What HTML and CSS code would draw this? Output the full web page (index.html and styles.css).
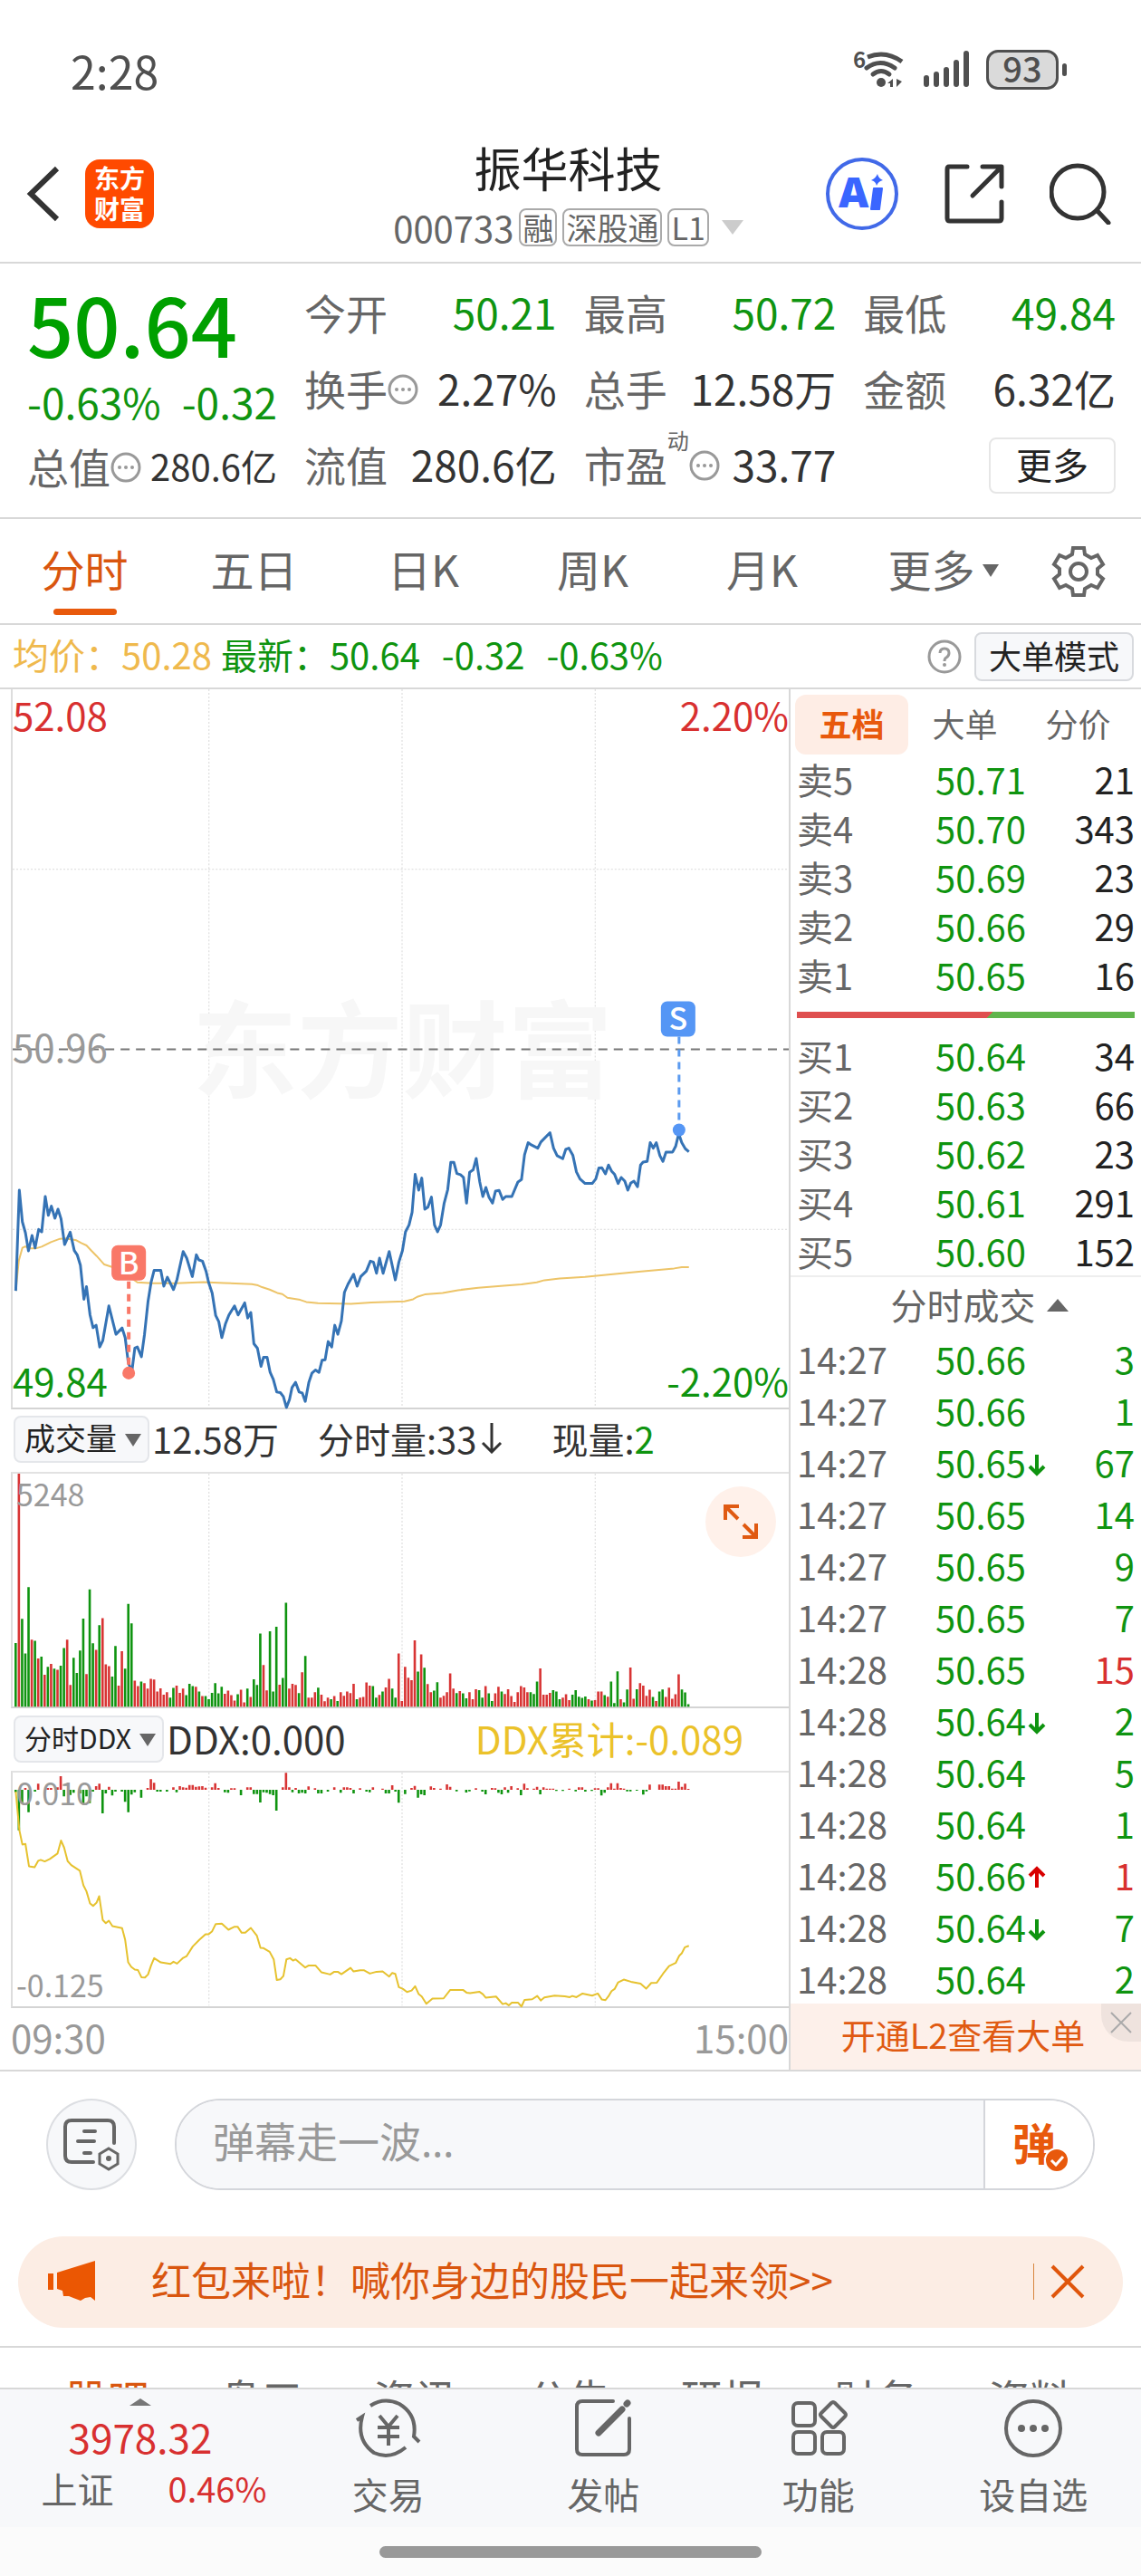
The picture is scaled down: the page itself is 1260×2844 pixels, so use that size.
FILE: index.html
```html
<!DOCTYPE html>
<html lang="zh-CN">
<head>
<meta charset="utf-8">
<meta name="viewport" content="width=device-width, initial-scale=1">
<title>振华科技 000733</title>
<link rel="stylesheet" href="styles.css">
</head>
<body>
<div class="app">
  <div class="status">
    <span class="clock">2:28</span>
    <div class="status-icons">
      <svg width="60" height="44" viewBox="0 0 60 44" fill="none" stroke="#4f4f4f" stroke-width="5" stroke-linecap="round">
        <text x="1" y="20" class="wifi-gen">6</text>
        <path d="M17 8Q37 0 55 13" stroke-linecap="butt"/><path d="M16 20Q31 9 47 20M23 27Q32 20 41 27"/>
        <circle cx="32" cy="36" r="5" fill="#4f4f4f" stroke="none"/>
        <path d="M39 37l6-5v9h-3v-4zM49 32l6 3-6 6z" fill="#4f4f4f" stroke="none"/>
      </svg>
      <svg width="52" height="44" viewBox="0 0 52 44" stroke="#4f4f4f" stroke-width="6" stroke-linecap="round">
        <path d="M4 31v7M15 27v11M26 22v16M37 14v24M48 4v34"/>
      </svg>
      <span class="battery">93</span>
    </div>
  </div>

  <header class="header">
    <div class="header-side">
      <button class="plain" aria-label="返回"><svg width="40" height="64" viewBox="0 0 40 64" fill="none" stroke="#333" stroke-width="6"><path d="M35 4L6 32l29 28"/></svg></button>
      <a class="logo" href="#">东方<br>财富</a>
    </div>
    <div class="title">
      <h1>振华科技</h1>
      <div class="sub"><span>000733</span><i class="tag">融</i><i class="tag">深股通</i><i class="tag">L1</i><svg class="sub-tri" width="24" height="16" viewBox="0 0 24 16"><path d="M0 0h24L12 16z" fill="#ccc"/></svg></div>
    </div>
    <div class="header-side header-actions">
      <button class="plain" aria-label="Ai"><svg width="82" height="82" viewBox="0 0 82 82">
        <circle cx="41" cy="41" r="38" fill="none" stroke="#4169e8" stroke-width="4"/>
        <text x="15" y="56" class="ai-text">A</text>
        <path d="M54 35h9l-3 23h-9z" fill="#3a66ff" stroke="#3a66ff" stroke-width="2" stroke-linejoin="round"/>
        <path d="M58 19q1 5 6 7-5 1-7 6-1-5-6-6 5-2 7-7z" fill="#3a66ff"/>
      </svg></button>
      <button class="plain" aria-label="分享"><svg width="66" height="66" viewBox="0 0 66 66" fill="none" stroke="#333" stroke-width="5" stroke-linecap="round" stroke-linejoin="round"><path d="M25 3H5Q3 3 3 6v54q0 3 3 3h54q3 0 3-3V42M42 3h21v22M62 4L31 35"/></svg></button>
      <button class="plain" aria-label="搜索"><svg width="68" height="68" viewBox="0 0 68 68" fill="none" stroke="#333" stroke-width="5" stroke-linecap="round"><circle cx="31" cy="32" r="29"/><path d="M52 52l13 14"/></svg></button>
    </div>
  </header>

  <main class="main">
    <section class="quote">
      <div class="quote-main">
        <div class="price">50.64</div>
        <div class="change"><span>-0.63%</span><span>-0.32</span></div>
        <div class="cell small"><span>总值<svg class="dots" width="34" height="34"><use href="#i-dots"/></svg></span><b>280.6亿</b></div>
      </div>
      <div class="quote-grid">
        <div class="cell"><span>今开</span><b class="down">50.21</b></div>
        <div class="cell"><span>最高</span><b class="down">50.72</b></div>
        <div class="cell"><span>最低</span><b class="down">49.84</b></div>
        <div class="cell"><span>换手<svg class="dots" width="34" height="34"><use href="#i-dots"/></svg></span><b>2.27%</b></div>
        <div class="cell"><span>总手</span><b>12.58万</b></div>
        <div class="cell"><span>金额</span><b>6.32亿</b></div>
        <div class="cell"><span>流值</span><b>280.6亿</b></div>
        <div class="cell"><span>市盈<sup>动</sup><svg class="dots" width="34" height="34"><use href="#i-dots"/></svg></span><b>33.77</b></div>
        <div class="cell cell-end"><button class="more">更多</button></div>
      </div>
    </section>

    <nav class="tabs">
      <a class="tab active" href="#">分时</a><a class="tab" href="#">五日</a><a class="tab" href="#">日K</a><a class="tab" href="#">周K</a><a class="tab" href="#">月K</a>
      <a class="tab tab-more" href="#">更多<svg width="18" height="14" viewBox="0 0 18 14"><path d="M0 0h18L9 14z" fill="#666"/></svg></a>
      <button class="plain gear" aria-label="设置"><svg width="60" height="60" viewBox="-30 -30 60 60" fill="none" stroke="#666" stroke-width="4"><path d="M-6-26H6L7-19 14-15 21-18 27-8 21-3V3L27 8 21 18 14 15 7 19 6 26H-6L-7 19-14 15-21 18-27 8-21 3V-3L-27-8-21-18-14-15-7-19z"/><circle r="9"/></svg></button>
    </nav>

    <div class="info">
      <span class="avg">均价：50.28</span><span class="latest">最新：50.64</span><span class="latest">-0.32</span><span class="latest">-0.63%</span>
      <div class="info-end">
        <svg width="38" height="38" viewBox="0 0 38 38" fill="none" stroke="#999" stroke-width="3"><circle cx="19" cy="19" r="17"/><path d="M14 15q0-5 5-5t5 5q0 3-3 5-2 1-2 4"/><circle cx="19" cy="28" r="2" fill="#999" stroke="none"/></svg>
        <button class="mode">大单模式</button>
      </div>
    </div>

    <div class="board">
      <div class="charts">
        <div class="plot">
          <svg class="plot-svg" viewBox="0 0 856 792">
            <path class="grid" d="M216.500 0V792M429.500 0V792M642.500 0V792M0 198.500H856M0 595.500H856"/>
            <text class="watermark" x="430" y="441" text-anchor="middle">东方财富</text>
            <path d="M0 397H856" stroke="#777" stroke-width="2" stroke-dasharray="10 7"/>
            <g transform="translate(-14 380) scale(.5612 .3333)">
              <path class="avg-line" d="M31 850L37 750 44 708 50 703 57 710 70 710 82 704 100 689 118 678 128 677 150 683 160 692 170 700 180 718 190 735 205 763 220 771 235 780 245 788 252 800 270 822 300 825 345 825 400 821 440 824 495 828 507 832 515 838 530 846 545 857 555 861 565 873 590 880 602 887 625 891 690 893 730 889 795 885 812 878 820 870 835 862 870 857 900 848 940 840 990 833 1025 829 1055 822 1070 815 1100 809 1150 804 1200 796 1260 786 1300 780 1325 776 1340 772 1354 772"/>
              <path class="price-line" d="M31 850L38 517 44 622 50 658 56 718 63 667 69 708 76 647 82 655 89 538 95 600 101 570 108 610 114 580 120 612 127 697 138 656 146 717 152 732 158 765 165 878 170 836 177 930 183 972 189 964 196 1036 202 1015 214 900 228 994 240 973 246 1005 252 1085 259 1120 265 1040 270 1036 278 1068 284 995 291 885 297 822 303 782 316 782 322 835 329 805 341 846 348 812 360 720 367 742 378 803 386 731 391 748 398 752 405 785 410 822 417 857 424 932 430 952 436 1005 443 960 450 930 461 900 468 930 481 890 487 940 493 922 499 1025 506 1040 513 1100 518 1070 525 1070 531 1120 537 1142 544 1185 551 1187 557 1200 563 1236 569 1210 574 1170 581 1153 588 1185 594 1188 600 1216 607 1153 613 1123 620 1112 627 1120 633 1080 639 1078 645 1018 652 1036 658 964 664 994 671 950 677 855 684 828 695 795 702 835 709 803 720 785 728 752 734 755 740 792 746 742 753 792 765 720 777 814 784 755 791 717 797 655 804 632 810 590 816 465 823 517 829 477 835 580 841 573 848 540 854 632 860 655 866 632 873 560 880 515 886 425 892 425 898 462 905 466 911 475 917 560 923 458 930 450 936 412 943 490 949 538 955 508 961 540 968 560 974 520 981 518 988 548 994 538 1006 538 1018 490 1025 482 1031 400 1038 360 1044 367 1057 378 1063 358 1081 327 1088 378 1095 403 1106 413 1112 382 1118 378 1126 402 1133 457 1140 480 1150 495 1164 495 1171 480 1177 444 1183 443 1190 463 1196 434 1202 454 1208 465 1215 495 1221 475 1228 487 1234 517 1240 493 1246 487 1253 506 1259 434 1264 424 1272 422 1278 360 1284 378 1290 360 1297 403 1303 422 1309 391 1322 391 1328 372 1334 330 1340 360 1347 380 1354 390"/>
            </g>
            <path d="M128 653V750" stroke="#f97868" stroke-width="4" stroke-dasharray="8 6"/><circle cx="128" cy="754" r="7" fill="#f97868"/>
            <rect x="109" y="613" width="38" height="39" rx="7" fill="#f97868"/><text class="mark" x="128" y="645" text-anchor="middle">B</text>
            <path d="M735 383V484" stroke="#5b9bf0" stroke-width="3" stroke-dasharray="8 6"/><circle cx="735" cy="486" r="7" fill="#5596f5"/>
            <rect x="715" y="344" width="38" height="39" rx="7" fill="#5596f5"/><text class="mark" x="734" y="376" text-anchor="middle">S</text>
          </svg>
          <span class="lab tl up">52.08</span><span class="lab tr up">2.20%</span><span class="lab ml">50.96</span>
          <span class="lab bl down">49.84</span><span class="lab br down">-2.20%</span>
        </div>
        <div class="bar-head">
          <label class="pick"><select aria-label="指标一"><option>成交量</option></select><svg width="18" height="14" viewBox="0 0 18 14"><path d="M0 0h18L9 14z" fill="#666"/></svg></label>
          <span class="vol-total">12.58万</span><span class="vol-min">分时量:33<svg width="26" height="34" viewBox="0 0 26 34" fill="none" stroke="#333" stroke-width="3"><path d="M13 0v32M3 22l10 10 10-10"/></svg></span><span>现量:<em class="down">2</em></span>
        </div>
        <div class="plot">
          <svg class="plot-svg" viewBox="0 0 856 257">
            <path class="grid" d="M216.500 0V257M429.500 0V257M642.500 0V257"/>
            <path id="vol-down" fill="#0f9410"/><path id="vol-up" fill="#d83434"/>
          </svg>
          <span class="lab minor tl">5248</span>
          <button class="expand" aria-label="放大"><svg width="40" height="40" viewBox="0 0 40 40" fill="none" stroke="#e05a12" stroke-width="4"><path d="M3 18V3h15M4 4l13 13M37 22v15H22M36 36L23 23"/></svg></button>
        </div>
        <div class="bar-head">
          <label class="pick pick-ddx"><select aria-label="指标二"><option>分时DDX</option></select><svg width="18" height="14" viewBox="0 0 18 14"><path d="M0 0h18L9 14z" fill="#666"/></svg></label>
          <span class="ddx-now">DDX:0.000</span><span class="ddx-sum">DDX累计:-0.089</span>
        </div>
        <div class="plot">
          <span class="lab minor tl">0.010</span><span class="lab minor bl">-0.125</span>
          <svg class="plot-svg" viewBox="0 0 856 257">
            <path class="grid" d="M216.500 0V257M429.500 0V257M642.500 0V257"/>
            <path id="ddx-down" fill="#0f9410"/><path id="ddx-up" fill="#d83434"/>
            <g transform="translate(-14 -74) scale(.5612 .3333)"><path class="ddx-line" d="M31 285L38 412 44 460 50 458 57 532 68 535 75 514 80 511 88 516 98 508 113 490 120 447 126 470 133 515 140 528 157 547 164 595 170 615 177 655 183 663 190 652 195 631 202 710 208 720 214 712 221 730 240 737 246 775 252 850 258 865 265 874 271 875 278 899 285 900 291 890 297 860 303 836 316 850 335 855 341 848 348 854 360 835 367 829 379 797 392 775 404 757 410 757 417 747 424 723 436 722 449 742 461 732 467 732 475 752 482 752 493 736 505 762 512 802 518 803 530 815 538 840 544 908 551 906 557 895 563 840 570 836 576 844 581 840 600 867 607 860 620 860 632 883 649 890 657 881 664 881 671 889 689 868 695 880 708 876 715 876 727 887 740 881 752 880 765 897 771 885 777 888 784 932 792 938 800 948 809 943 816 929 823 955 829 963 838 987 850 970 872 969 885 941 910 941 917 950 924 952 942 947 949 955 955 967 975 963 988 988 994 985 1000 992 1006 983 1018 983 1025 996 1031 974 1046 972 1056 961 1063 976 1070 966 1090 960 1110 962 1120 965 1125 961 1133 965 1145 953 1164 960 1175 953 1183 973 1190 975 1196 962 1202 945 1208 938 1215 916 1226 907 1240 914 1259 920 1270 937 1280 918 1291 917 1303 888 1315 862 1328 852 1335 828 1340 820 1346 800 1354 795"/></g>
          </svg>
        </div>
        <div class="times"><span>09:30</span><span>15:00</span></div>
      </div>

      <aside class="side">
        <div class="side-tabs"><button class="on">五档</button><button>大单</button><button>分价</button></div>
        <table class="book">
          <tr><th>卖5</th><td class="down">50.71</td><td>21</td></tr>
          <tr><th>卖4</th><td class="down">50.70</td><td>343</td></tr>
          <tr><th>卖3</th><td class="down">50.69</td><td>23</td></tr>
          <tr><th>卖2</th><td class="down">50.66</td><td>29</td></tr>
          <tr><th>卖1</th><td class="down">50.65</td><td>16</td></tr>
        </table>
        <div class="ratio"></div>
        <table class="book">
          <tr><th>买1</th><td class="down">50.64</td><td>34</td></tr>
          <tr><th>买2</th><td class="down">50.63</td><td>66</td></tr>
          <tr><th>买3</th><td class="down">50.62</td><td>23</td></tr>
          <tr><th>买4</th><td class="down">50.61</td><td>291</td></tr>
          <tr><th>买5</th><td class="down">50.60</td><td>152</td></tr>
        </table>
        <h2 class="deals-title">分时成交<svg width="24" height="16" viewBox="0 0 24 16"><path d="M0 15L12 1l12 14z" fill="#666"/></svg></h2>
        <table class="book deals">
          <tr><th>14:27</th><td class="down">50.66</td><td class="down">3</td></tr>
          <tr><th>14:27</th><td class="down">50.66</td><td class="down">1</td></tr>
          <tr><th>14:27</th><td class="down">50.65<svg class="arr" width="20" height="28"><use href="#i-down"/></svg></td><td class="down">67</td></tr>
          <tr><th>14:27</th><td class="down">50.65</td><td class="down">14</td></tr>
          <tr><th>14:27</th><td class="down">50.65</td><td class="down">9</td></tr>
          <tr><th>14:27</th><td class="down">50.65</td><td class="down">7</td></tr>
          <tr><th>14:28</th><td class="down">50.65</td><td class="up">15</td></tr>
          <tr><th>14:28</th><td class="down">50.64<svg class="arr" width="20" height="28"><use href="#i-down"/></svg></td><td class="down">2</td></tr>
          <tr><th>14:28</th><td class="down">50.64</td><td class="down">5</td></tr>
          <tr><th>14:28</th><td class="down">50.64</td><td class="down">1</td></tr>
          <tr><th>14:28</th><td class="down">50.66<svg class="arr" width="20" height="28"><use href="#i-up"/></svg></td><td class="up">1</td></tr>
          <tr><th>14:28</th><td class="down">50.64<svg class="arr" width="20" height="28"><use href="#i-down"/></svg></td><td class="down">7</td></tr>
          <tr><th>14:28</th><td class="down">50.64</td><td class="down">2</td></tr>
        </table>
        <div class="l2"><a href="#">开通L2查看大单</a><button class="l2-close" aria-label="关闭"><svg width="24" height="24" viewBox="0 0 24 24" stroke="#aaa" stroke-width="2"><path d="M1 1l22 22M23 1L1 23"/></svg></button></div>
      </aside>
    </div>

    <form class="chat">
      <button type="button" class="chat-set" aria-label="弹幕设置"><svg width="66" height="60" viewBox="0 0 66 60" fill="none" stroke="#666" stroke-width="4" stroke-linecap="round"><path d="M35 50H11q-7 0-7-7V11q0-7 7-7h40q7 0 7 7v18M25 16h12M18 27h18M25 40h7"/><path d="M52 35l10 6v11l-10 6-10-6V41z" stroke-width="3"/><circle cx="52" cy="46" r="3" fill="#666" stroke="none"/></svg></button>
      <div class="chat-box">
        <input type="text" placeholder="弹幕走一波…" aria-label="弹幕">
        <button type="button" class="danmu" aria-label="弹幕开关"><span>弹</span><svg width="28" height="28" viewBox="0 0 28 28"><circle cx="14" cy="14" r="13" fill="#e8590c" stroke="#fff" stroke-width="2"/><path d="M8 14l5 5 8-9" fill="none" stroke="#fff" stroke-width="3"/></svg></button>
      </div>
    </form>

    <div class="promo">
      <svg width="54" height="46" viewBox="0 0 54 46" fill="#eb5703"><path d="M0 14h6v18H0zM10 13L52 0v44l-5-4-6 1-5 3-8-3-5-2-6 0-1-6-6-2z"/></svg>
      <a href="#">红包来啦！喊你身边的股民一起来领&gt;&gt;</a>
      <i class="promo-line"></i>
      <button class="plain" aria-label="关闭"><svg width="38" height="38" viewBox="0 0 38 38" stroke="#e0560c" stroke-width="4"><path d="M2 2l34 34M36 2L2 36"/></svg></button>
    </div>

    <nav class="sections"><a class="active" href="#">股吧</a><a href="#">盘口</a><a href="#">资讯</a><a href="#">公告</a><a href="#">研报</a><a href="#">财务</a><a href="#">资料</a></nav>
  </main>

  <nav class="dock">
    <a class="index" href="#"><svg width="24" height="8" viewBox="0 0 24 8"><path d="M0 8L12 0l12 8z" fill="#777"/></svg><b>3978.32</b><span><i>上证</i><em>0.46%</em></span></a>
    <a class="item" href="#"><svg width="76" height="66" viewBox="0 0 76 66" fill="none" stroke="#666" stroke-width="4"><path d="M18 8Q33-2 50 6 70 18 66 42l6 6M57 54Q40 68 22 60 2 46 9 20l-6 4"/><path d="M28 19l10 12 10-12M38 31v21M26 32h24M26 42h24"/></svg>交易</a>
    <a class="item" href="#"><svg width="66" height="66" viewBox="0 0 66 66" fill="none" stroke="#666" stroke-width="4" stroke-linecap="round"><path d="M44 3H10q-6 0-6 6v47q0 6 6 6h46q6 0 6-6V22"/><path d="M28 38L54 12" stroke-width="7"/><path d="M59 6l1-1" stroke-width="7"/></svg>发帖</a>
    <a class="item" href="#"><svg width="66" height="66" viewBox="0 0 66 66" fill="none" stroke="#666" stroke-width="4"><rect x="5" y="5" width="24" height="25" rx="5"/><rect x="5" y="37" width="24" height="24" rx="5"/><rect x="37" y="37" width="24" height="24" rx="5"/><path d="M47 5q2-2 4 0l11 11q2 2 0 4L51 31q-2 2-4 0L36 20q-2-2 0-4z"/></svg>功能</a>
    <a class="item" href="#"><svg width="66" height="66" viewBox="0 0 66 66" fill="none" stroke="#666" stroke-width="4"><circle cx="33" cy="33" r="30"/><g fill="#666" stroke="none"><circle cx="20" cy="33" r="4"/><circle cx="33" cy="33" r="4"/><circle cx="46" cy="33" r="4"/></g></svg>设自选</a>
  </nav>
  <div class="home"><i></i></div>
</div>

<svg class="defs" width="0" height="0">
  <symbol id="i-dots" viewBox="0 0 34 34"><circle cx="17" cy="17" r="15" fill="none" stroke="#999" stroke-width="3"/><g fill="#999"><circle cx="10" cy="17" r="2"/><circle cx="17" cy="17" r="2"/><circle cx="24" cy="17" r="2"/></g></symbol>
  <symbol id="i-down" viewBox="0 0 20 28"><path d="M10 3v20M2 16l8 8 8-8" fill="none" stroke="#0f9410" stroke-width="4"/></symbol>
  <symbol id="i-up" viewBox="0 0 20 28"><path d="M10 25V5M2 12l8-8 8 8" fill="none" stroke="#d80000" stroke-width="4"/></symbol>
</svg>
<script src="charts.js"></script>
</body>
</html>
```
FILE: styles.css
```css
* { box-sizing: border-box; }
body { margin: 0; font-family: "Noto Sans CJK SC", "Noto Sans", sans-serif; font-size: 40px; color: #333; background: #fff; }
button, input, select { font: inherit; color: inherit; margin: 0; }
button { padding: 0; cursor: pointer; }
a { color: inherit; text-decoration: none; }
i, em { font-style: normal; }
b, h1, h2, th { font-weight: 400; }
svg { display: block; flex: none; }
.defs { position: absolute; }
.plain { border: 0; background: none; display: flex; }
.down { color: #0f9410; }
.up { color: #d83030; }

.app { height: 100vh; display: flex; flex-direction: column; }
.main { flex: 1; min-height: 0; overflow: hidden; }

/* status bar */
.status { flex: none; display: flex; justify-content: space-between; align-items: center; height: 138px; padding: 16px 91px 0 78px; color: #4f4f4f; }
.clock { font-size: 50px; line-height: 50px; }
.status-icons { display: flex; align-items: center; gap: 18px; }
.wifi-gen { font-size: 24px; font-weight: 700; fill: #4f4f4f; stroke: none; }
.battery { position: relative; width: 80px; height: 44px; border: 3px solid #4f4f4f; border-radius: 13px; background: #dadada; font-size: 38px; line-height: 34px; font-weight: 500; text-align: center; }
.battery::after { content: ""; position: absolute; right: -12px; top: 12px; width: 5px; height: 14px; border-radius: 3px; background: #4f4f4f; }

/* header */
.header { flex: none; display: grid; grid-template-columns: 1fr auto 1fr; align-items: center; height: 153px; padding: 0 33px 0 28px; border-bottom: 2px solid #d8d8d8; }
.header-side { display: flex; align-items: center; gap: 26px; }
.header-actions { justify-content: flex-end; gap: 50px; }
.logo { width: 76px; height: 76px; border-radius: 16px; background: #ff4a00; color: #fff; font-size: 28px; line-height: 34px; font-weight: 700; text-align: center; padding-top: 3px; }
.title { padding-top: 6px; text-align: center; }
h1 { margin: 0; font-size: 52px; line-height: 68px; color: #222; }
.sub { display: flex; align-items: center; justify-content: center; gap: 6px; color: #666; line-height: 64px; }
.tag { border: 2px solid #aaa; border-radius: 8px; padding: 0 2px; font-size: 34px; line-height: 38px; }
.sub-tri { margin-left: 8px; }
.ai-text { font-family: "Open Sans", sans-serif; font-size: 46px; font-weight: 800; fill: #3a66ff; }

/* quote */
.quote { display: grid; grid-template-columns: 276px 1fr; column-gap: 30px; padding: 11px 28px 17px 30px; border-bottom: 2px solid #d8d8d8; }
.quote-main { display: flex; flex-direction: column; }
.price { font-size: 90px; line-height: 108px; font-weight: 500; color: #00a000; }
.change { display: flex; justify-content: space-between; font-size: 46px; line-height: 66px; color: #0f9410; }
.quote-grid { display: grid; grid-template-columns: repeat(3, 1fr); column-gap: 30px; grid-auto-rows: 84px; }
.cell { display: flex; justify-content: space-between; align-items: center; font-size: 46px; line-height: 76px; }
.cell > span { display: flex; align-items: center; color: #666; }
.small b { font-size: 40px; }
.dots { margin-top: 4px; }
sup { font-size: 24px; line-height: 24px; align-self: flex-start; }
.cell-end { justify-content: flex-end; }
.more { width: 140px; height: 62px; margin-top: 4px; border: 2px solid #e6e6e6; border-radius: 8px; background: #fff; font-size: 40px; line-height: 50px; padding-bottom: 4px; color: #222; }

/* period tabs */
.tabs { display: grid; grid-template-columns: repeat(6, 187fr) 138fr; height: 117px; border-bottom: 2px solid #d8d8d8; font-size: 48px; color: #666; }
.tab { display: flex; flex-direction: column; align-items: center; padding-top: 18px; line-height: 72px; }
.tab.active { color: #d9560f; }
.tab.active::after { content: ""; width: 70px; height: 7px; margin-top: 9px; border-radius: 4px; background: #e8590c; }
.tab-more { flex-direction: row; justify-content: center; align-items: flex-start; gap: 8px; padding-left: 26px; }
.tab-more svg { margin-top: 32px; }
.gear { align-items: center; justify-content: center; }

/* average / latest line */
.info { display: flex; align-items: center; gap: 24px; height: 71px; padding: 0 8px 0 14px; border-bottom: 2px solid #d8d8d8; line-height: 60px; }
.info > span { padding-bottom: 5px; }
.avg { color: #efb94d; margin-right: -14px; }
.latest { color: #0f9410; }
.info-end { display: flex; align-items: center; gap: 14px; margin-left: auto; }
.mode { width: 176px; height: 54px; border: 2px solid #d8dade; border-radius: 8px; background: #f7f8fa; font-size: 36px; line-height: 44px; padding-bottom: 4px; color: #222; }

/* charts */
.board { display: grid; grid-template-columns: 1fr 389px; border-bottom: 2px solid #d8d8d8; }
.charts { padding-left: 12px; min-width: 0; }
.plot { position: relative; border-left: 2px solid #ddd; border-bottom: 2px solid #d4d4d4; }
.bar-head + .plot { border-top: 2px solid #e2e2e2; }
.plot-svg { width: 100%; height: auto; overflow: visible; }
.grid { fill: none; stroke: #d9d9d9; stroke-dasharray: 2 2; }
.watermark { font-size: 116px; font-weight: 700; fill: #f7f7f7; }
.price-line, .avg-line, .ddx-line { fill: none; stroke-width: 3; stroke-linejoin: round; vector-effect: non-scaling-stroke; }
.price-line { stroke: #3573b5; }
.avg-line { stroke: #edc468; stroke-width: 2; }
.ddx-line { stroke: #e6c22f; stroke-width: 2; }
.mark { font-size: 34px; font-weight: 500; fill: #fff; }
.lab { position: absolute; font-size: 42px; line-height: 56px; }
.tl, .ml, .bl { left: 0; }
.tr, .br { right: 0; }
.tl, .tr { top: 0; }
.ml { top: 50%; margin-top: -30px; color: #999; }
.bl, .br { bottom: 2px; }
.minor { left: 4px; font-size: 34px; line-height: 44px; color: #999; }
.bar-head { display: flex; align-items: center; height: 69px; padding: 0 0 2px 3px; line-height: 56px; white-space: nowrap; }
.bar-head > span { padding-bottom: 2px; }
.pick { position: relative; display: flex; margin-right: 3px; }
.pick select { appearance: none; height: 52px; padding: 0 34px 4px 10px; border: 2px solid #e4e6ea; border-radius: 8px; background: #f7f8fa; font-size: 34px; line-height: 44px; color: #222; }
.pick svg { position: absolute; right: 9px; top: 20px; }
.pick-ddx select { font-size: 30px; }
.vol-total { margin-right: 43px; }
.vol-min { display: flex; align-items: center; gap: 4px; margin-right: 53px; }
.ddx-now, .ddx-sum { font-size: 42px; }
.ddx-sum { margin-left: auto; margin-right: 50px; color: #ebc22a; }
.expand { position: absolute; right: 14px; top: 14px; width: 78px; height: 78px; border: 0; border-radius: 50%; background: #fff1ea; display: flex; align-items: center; justify-content: center; }
.times { display: flex; justify-content: space-between; padding-bottom: 4px; font-size: 42px; line-height: 64px; color: #999; }

/* order book */
.side { display: flex; flex-direction: column; border-left: 2px solid #d8d8d8; }
.side-tabs { display: grid; grid-template-columns: repeat(3, 1fr); margin: 6px 7px 0 5px; }
.side-tabs button { height: 66px; border: 0; border-radius: 12px; background: none; font-size: 36px; line-height: 60px; padding-bottom: 4px; color: #666; }
.side-tabs .on { background: #feede5; color: #e8590c; font-weight: 700; }
.book { width: 100%; border-collapse: collapse; table-layout: fixed; }
.book tr { height: 54px; }
.book th, .book td { padding: 0; line-height: 54px; text-align: left; }
.book th { width: 160px; padding-left: 7px; color: #666; }
.book td:last-child { width: 90px; padding-right: 7px; text-align: right; }
.book td:last-child:not(.down):not(.up) { color: #222; }
.ratio { height: 7px; margin: 14px 7px 14px; background: linear-gradient(135deg, #df4f4f 57%, #60b54c 57%); }
.deals-title { display: flex; align-items: center; justify-content: center; gap: 12px; margin: 0; padding-left: 30px; border-top: 2px solid #eee; font-size: 40px; line-height: 61px; color: #666; }
.deals tr { height: 57px; }
.deals .arr { display: inline-block; margin-left: 2px; }
.l2 { position: relative; flex: 1; display: flex; align-items: center; justify-content: center; padding: 0 6px 4px 0; background: #fdf0ea; color: #e05a12; font-size: 38px; line-height: 60px; }
.l2-close { position: absolute; right: 0; top: 0; width: 44px; height: 42px; border: 0; border-bottom-left-radius: 30px; background: #efe3de; display: flex; align-items: center; justify-content: center; }

/* comment bar */
.chat { display: flex; gap: 42px; padding: 30px 51px 0; }
.chat-set { width: 100px; height: 101px; border: 2px solid #dcdee2; border-radius: 50%; background: #f7f8fa; display: flex; align-items: center; justify-content: center; flex: none; }
.chat-box { flex: 1; display: flex; height: 101px; border: 2px solid #d4d6db; border-radius: 51px; overflow: hidden; }
.chat-box input { flex: 1; min-width: 0; border: 0; padding: 0 0 6px 40px; background: #f7f8fa; font-family: "Noto Sans", "Noto Sans CJK SC", sans-serif; font-size: 46px; outline: 0; }
.chat-box input::placeholder { color: #999; }
.danmu { position: relative; width: 121px; border: 0; border-left: 2px solid #d4d6db; background: #fff; color: #e8590c; font-size: 48px; font-weight: 700; line-height: 88px; text-align: left; padding-left: 30px; }
.danmu span { display: block; margin-top: -6px; }
.danmu svg { position: absolute; left: 65px; top: 52px; }

.promo { display: flex; align-items: center; height: 101px; margin: 51px 20px 20px; padding: 0 42px 0 33px; border-radius: 51px; background: #fcede4; color: #d9560f; font-size: 44px; line-height: 66px; }
.promo a { flex: 1; margin: -6px 0 0 60px; }
.promo-line { width: 1px; height: 40px; margin-right: 18px; background: #d9863f; }

.sections { display: grid; grid-template-columns: repeat(7, 1fr); padding: 18px 38px 0 34px; border-top: 2px solid #d8d8d8; font-size: 46px; line-height: 72px; text-align: center; color: #666; }
.sections .active { color: #d9560f; }

/* bottom dock */
.dock { flex: none; display: grid; grid-template-columns: 310px repeat(4, 1fr); height: 154px; border-top: 2px solid #d8d8d8; background: #f7f8fa; color: #666; }
.index { display: flex; flex-direction: column; align-items: center; padding-top: 10px; color: #d83030; }
.index b { font-size: 44px; line-height: 68px; }
.index span { display: flex; gap: 60px; margin-left: 30px; line-height: 46px; }
.index i { color: #666; }
.index em { font-size: 38px; }
.item { display: flex; flex-direction: column; align-items: center; padding-top: 10px; line-height: 78px; }
.home { flex: none; height: 54px; padding-top: 21px; background: #fbfbfb; }
.home i { display: block; width: 422px; height: 13px; margin: 0 auto; border-radius: 7px; background: #999; }
```
FILE: charts.js
```js
// One entry per minute: r = rising, g = falling, number = top of the bar (base 998, three units per pixel).
const volume = `g787 r222 g707 g822 g602 r776 g780 r838 g832 r892 g866 r856 g872 r876 g862 g804 r776 r926 g836 g886
g812 g706 r890 g610 g788 r810 g728 r705 r858 r864 g898 g797 r928 r814 g872 g658 g722 r912 r930 g915
r920 r938 r906 r908 r948 r937 r958 r950 g968 g936 r928 r952 r938 g960 g922 g930 r932 g948 r963 g963
g973 g952 g920 g954 g932 r955 r945 r960 r978 g957 r942 r984 g938 r966 g907 g926 g756 r860 r944 g748
g948 g733 r925 g903 g654 r938 r922 r926 g953 r884 g830 r968 r968 r950 g935 r958 r980 r968 g973 r963
g979 r950 r962 r948 r953 r922 g973 r968 r966 r918 r928 g930 g968 r959 g948 r934 r906 g938 g968 r822
r979 r866 r902 r910 r778 g882 r825 g869 r923 r950 g945 g917 r968 r962 r950 r888 r938 g953 r946 g954
g970 r950 r973 r940 g943 g968 r930 g954 g979 r954 r932 g948 r956 r940 r963 r982 r950 r930 r934 r950
g950 g956 g915 r871 r958 r958 r952 g943 g948 g973 r968 r957 r976 g958 g943 g965 g969 g964 r973 g978
r976 r948 r948 g960 r965 g915 g986 g881 r973 g984 g941 r868 r972 g940 r920 r928 r962 r942 g966 r979
g948 g941 r966 r935 r972 r957 r891 g941 g951 g990`.split(/\s+/);

// minute:value, positive above the zero line, negative below it.
const ddx = `0:-8 1:-134 2:-45 3:6 4:-74 6:-6 7:20 10:6 11:6 13:8 14:45 15:-22 17:-17 18:-10 20:-12 21:-47 22:-22 23:-44 24:-6
25:12 26:20 27:-78 28:-12 29:10 30:-19 31:-6 33:-6 34:-40 35:-74 36:-16 37:-8 39:-26 41:6 42:35 43:23 44:-6 45:-6 47:-6
49:8 50:-8 51:12 52:8 53:7 54:16 55:16 56:10 57:11 58:12 59:7 61:8 62:22 63:6 65:-8 66:-10 67:5 68:5 70:-18 72:8 73:8
74:-14 75:-14 76:-42 77:-8 78:-10 79:-14 80:-18 81:-69 83:8 84:56 85:8 86:-8 87:6 88:-12 89:-10 90:-12 91:11 93:5 94:-12
95:-12 97:-6 99:8 101:-10 102:8 103:8 104:6 105:-12 107:5 109:-6 110:-8 111:8 114:4 115:-12 116:-12 117:15 118:-6 119:-43
121:-14 123:6 124:13 125:-26 126:-15 127:-18 129:11 130:6 132:4 134:18 135:10 137:-5 140:-9 141:-5 143:5 145:-6 146:-15
148:6 149:5 150:-10 151:-15 152:8 153:-10 154:12 156:5 157:-18 158:20 159:5 161:4 162:10 163:-15 164:8 165:4 166:4 167:4
168:-4 170:-4 172:4 174:-5 175:8 176:8 177:-6 179:-4 180:5 181:5 182:-19 183:-10 184:8 185:22 186:4 187:22 188:6 189:4
190:-5 191:-5 193:-3 195:-16 196:-5 197:17 200:17 201:17 202:12 203:12 204:4 205:4 206:27 207:10 208:20 209:3`.split(/\s+/);

const SLOT = 3.55;
const bar = (i, top, height) => `M${(2 + i * SLOT).toFixed(2)} ${top.toFixed(1)}h2.6v${height.toFixed(1)}h-2.6z`;
const draw = (id, bars) => document.getElementById(id).setAttribute("d", bars.join(""));

const BASE = 257;
const vol = { r: [], g: [] };
volume.forEach((v, i) => {
  const height = Math.min(BASE, (998 - Number(v.slice(1))) / 3);
  vol[v[0]].push(bar(i, BASE - height, height));
});
draw("vol-up", vol.r);
draw("vol-down", vol.g);

const ZERO = 19;
const flow = { up: [], down: [] };
ddx.forEach((entry) => {
  const [i, value] = entry.split(":").map(Number);
  if (value > 0) flow.up.push(bar(i, ZERO - value / 3, value / 3));
  else flow.down.push(bar(i, ZERO, -value / 3));
});
draw("ddx-up", flow.up);
draw("ddx-down", flow.down);
```
